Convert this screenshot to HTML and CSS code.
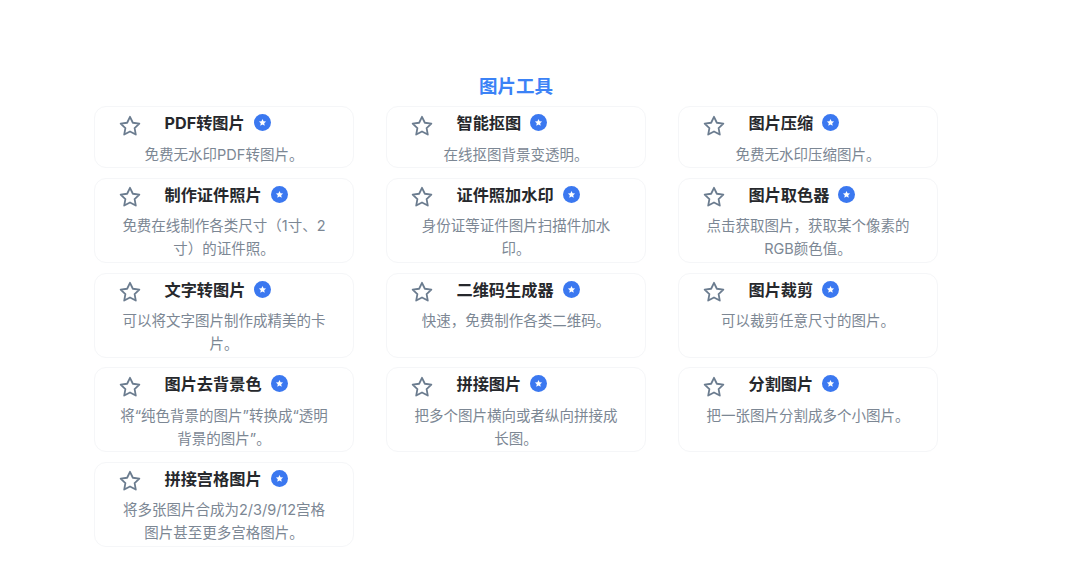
FILE: index.html
```html
<!DOCTYPE html>
<html lang="zh-CN">
<head>
<meta charset="utf-8">
<title>图片工具</title>
<link rel="stylesheet" href="styles.css">
</head>
<body>
<svg class="defs" width="0" height="0" aria-hidden="true">
  <defs>
    <symbol id="star" viewBox="0 0 24 24"><path d="M12 2.8l2.85 5.95 6.5.87-4.75 4.5 1.2 6.45L12 17.45l-5.8 3.12 1.2-6.45-4.75-4.5 6.5-.87z" fill="none" stroke="currentColor" stroke-width="1.8" stroke-linejoin="round"/></symbol>
    <symbol id="badge" viewBox="0 0 16 16"><circle cx="8" cy="8" r="8" fill="#3b78f0"/><path d="M8 4.6l1 2.15 2.35.3-1.72 1.6.45 2.32L8 9.85l-2.08 1.12.45-2.32-1.72-1.6L7 6.75z" fill="#fff"/></symbol>
  </defs>
</svg>
<main class="page">
  <h1 class="heading">图片工具</h1>
  <section class="grid">
    <article class="card"><div class="head"><svg class="star"><use href="#star"/></svg><h2 class="name">PDF转图片</h2><svg class="badge"><use href="#badge"/></svg></div><p class="desc">免费无水印PDF转图片。</p></article>
    <article class="card"><div class="head"><svg class="star"><use href="#star"/></svg><h2 class="name">智能抠图</h2><svg class="badge"><use href="#badge"/></svg></div><p class="desc">在线抠图背景变透明。</p></article>
    <article class="card"><div class="head"><svg class="star"><use href="#star"/></svg><h2 class="name">图片压缩</h2><svg class="badge"><use href="#badge"/></svg></div><p class="desc">免费无水印压缩图片。</p></article>
    <article class="card"><div class="head"><svg class="star"><use href="#star"/></svg><h2 class="name">制作证件照片</h2><svg class="badge"><use href="#badge"/></svg></div><p class="desc">免费在线制作各类尺寸（1寸、2寸）的证件照。</p></article>
    <article class="card"><div class="head"><svg class="star"><use href="#star"/></svg><h2 class="name">证件照加水印</h2><svg class="badge"><use href="#badge"/></svg></div><p class="desc">身份证等证件图片扫描件加水印。</p></article>
    <article class="card"><div class="head"><svg class="star"><use href="#star"/></svg><h2 class="name">图片取色器</h2><svg class="badge"><use href="#badge"/></svg></div><p class="desc">点击获取图片，获取某个像素的RGB颜色值。</p></article>
    <article class="card"><div class="head"><svg class="star"><use href="#star"/></svg><h2 class="name">文字转图片</h2><svg class="badge"><use href="#badge"/></svg></div><p class="desc">可以将文字图片制作成精美的卡片。</p></article>
    <article class="card"><div class="head"><svg class="star"><use href="#star"/></svg><h2 class="name">二维码生成器</h2><svg class="badge"><use href="#badge"/></svg></div><p class="desc">快速，免费制作各类二维码。</p></article>
    <article class="card"><div class="head"><svg class="star"><use href="#star"/></svg><h2 class="name">图片裁剪</h2><svg class="badge"><use href="#badge"/></svg></div><p class="desc">可以裁剪任意尺寸的图片。</p></article>
    <article class="card"><div class="head"><svg class="star"><use href="#star"/></svg><h2 class="name">图片去背景色</h2><svg class="badge"><use href="#badge"/></svg></div><p class="desc">将“纯色背景的图片”转换成“透明背景的图片”。</p></article>
    <article class="card"><div class="head"><svg class="star"><use href="#star"/></svg><h2 class="name">拼接图片</h2><svg class="badge"><use href="#badge"/></svg></div><p class="desc">把多个图片横向或者纵向拼接成长图。</p></article>
    <article class="card"><div class="head"><svg class="star"><use href="#star"/></svg><h2 class="name">分割图片</h2><svg class="badge"><use href="#badge"/></svg></div><p class="desc">把一张图片分割成多个小图片。</p></article>
    <article class="card"><div class="head"><svg class="star"><use href="#star"/></svg><h2 class="name">拼接宫格图片</h2><svg class="badge"><use href="#badge"/></svg></div><p class="desc">将多张图片合成为2/3/9/12宫格图片甚至更多宫格图片。</p></article>
  </section>
</main>
</body>
</html>
```
FILE: styles.css
```css
* { box-sizing: border-box; }
html, body { margin: 0; padding: 0; background: #fff; }
body { font-family: "Inter", "Noto Sans CJK SC", sans-serif; }
.defs { position: absolute; }
.page { width: 938px; padding: 74.3px 0 0 94px; }
.heading { margin: 0 0 7px; font-size: 18.5px; line-height: 25px; font-weight: 700; color: #3b82f6; text-align: center; }
.grid { display: grid; grid-template-columns: repeat(3, 260px); column-gap: 32px; row-gap: 9.67px; }
.card { border: 1px solid #f5f6f8; border-radius: 12px; background: #fff; padding: 6.5px 24px 1.5px; min-height: 62px; }
.head { display: flex; align-items: flex-start; height: 29px; margin-left: -1px; }
.star { width: 24px; height: 24px; color: #6b7c8f; flex: none; }
.name { margin: -0.5px 0 0 22.5px; font-size: 16.2px; line-height: 20px; font-weight: 700; color: #26282c; }
.badge { width: 17px; height: 17px; margin: 0.5px 0 0 9px; flex: none; }
.desc { margin: 0; font-size: 14.5px; line-height: 23px; color: #7c8794; text-align: center; }
```
